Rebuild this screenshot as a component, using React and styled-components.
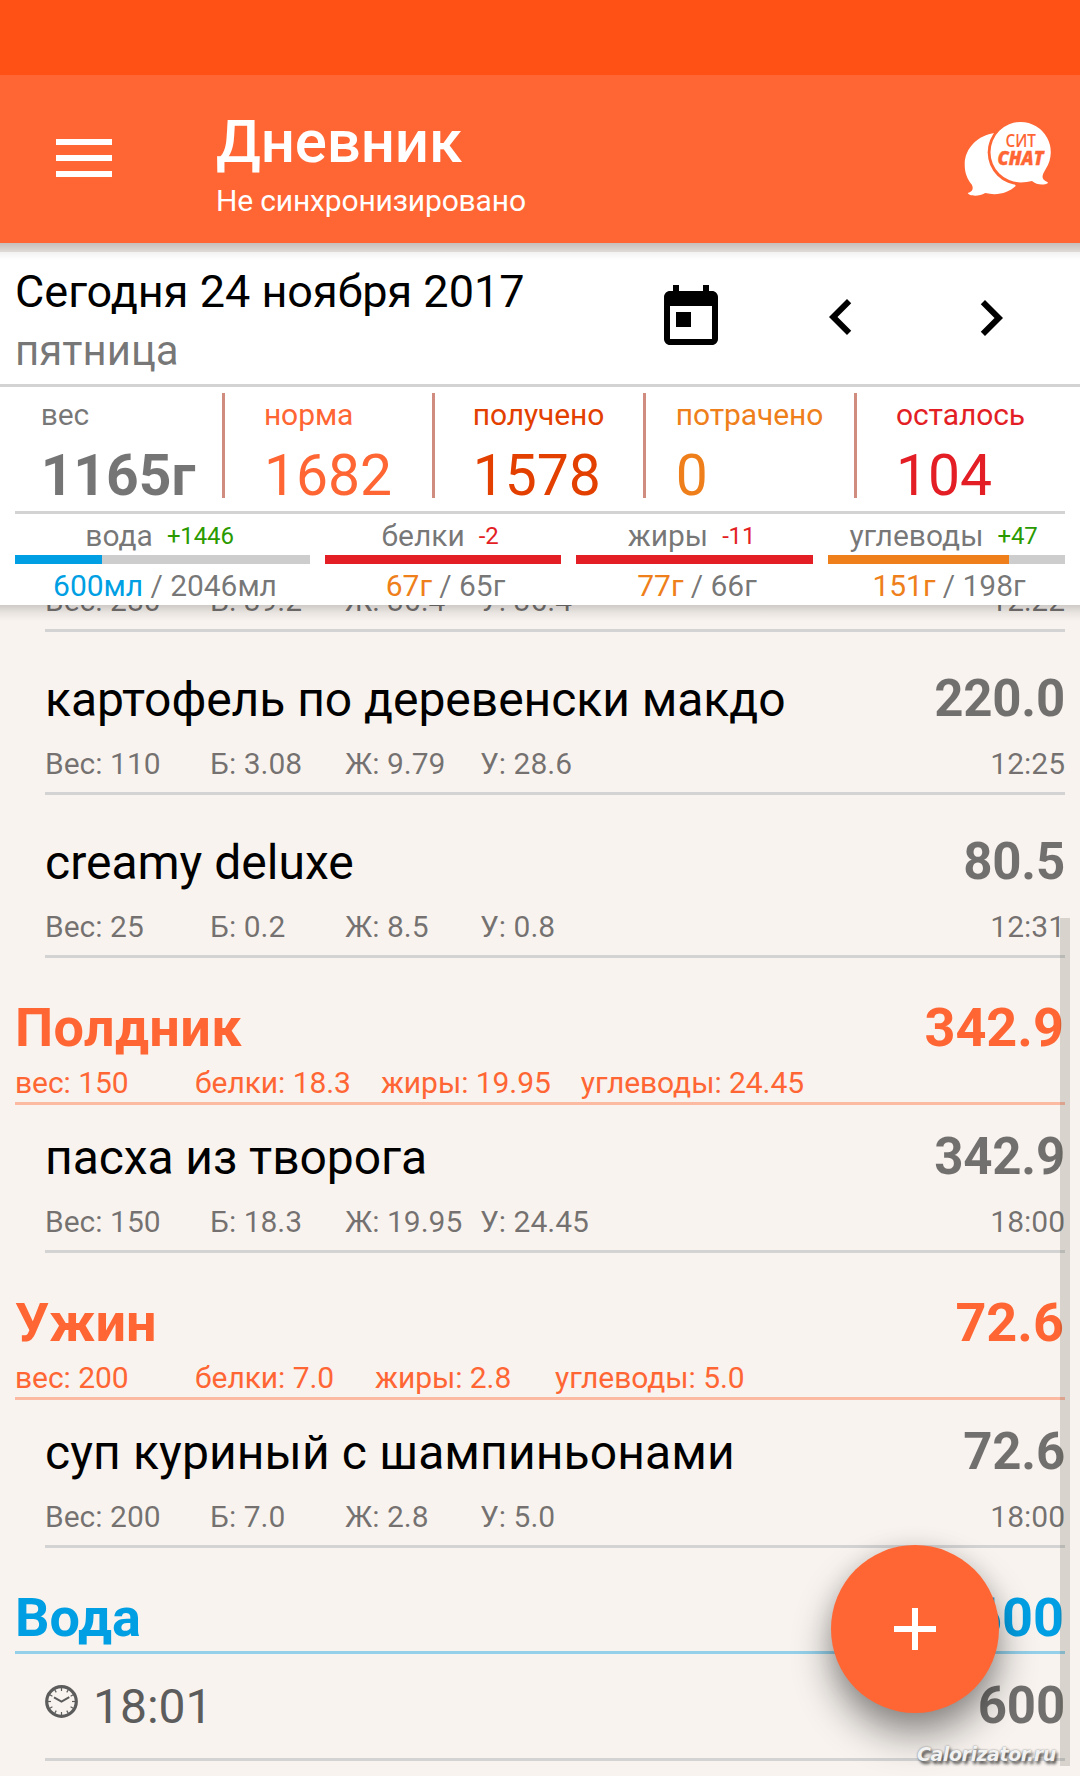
import React from "react";
import styled, { createGlobalStyle } from "styled-components";

const ORANGE = "#ff6634";
const BLUE = "#009fe3";
const RED = "#e31e25";
const AMBER = "#ee7f1a";
const GREEN = "#2a9a00";
const MUTED = "rgba(0, 0, 0, 0.54)";
const LINE = "#d3d3d3";

const GlobalStyle = createGlobalStyle`
  * { box-sizing: border-box; }
  body { margin: 0; font-family: Roboto, "Liberation Sans", sans-serif; color: #000; }
`;

const Screen = styled.main`
  position: relative;
  width: 1080px;
  height: 1776px;
  overflow: hidden;
  display: flex;
  flex-direction: column;
  background: #f8f3ef;
  white-space: nowrap;
`;

const StatusBar = styled.div`
  height: 75px;
  flex: none;
  background: #ff5015;
`;

const AppBar = styled.header`
  position: relative;
  z-index: 2;
  display: flex;
  align-items: flex-start;
  height: 168px;
  flex: none;
  padding-left: 56px;
  background: ${ORANGE};
  color: #fff;
  &::after {
    content: "";
    position: absolute;
    left: 0;
    right: 0;
    top: 168px;
    height: 18px;
    background: linear-gradient(#c6bfbd 0, #e0dbd6 9px, #f2f2f2 9px, #fff 17px);
  }
`;

const MenuButton = styled.div`
  display: flex;
  flex-direction: column;
  gap: 10px;
  width: 56px;
  margin-top: 64px;
`;

const MenuLine = styled.span`
  height: 6px;
  background: #fff;
`;

const Titles = styled.div`
  flex: 1;
  padding: 32px 0 0 104px;
`;

const Title = styled.h1`
  margin: 0;
  font-size: 60px;
  line-height: 70px;
  font-weight: 500;
  letter-spacing: -0.15px;
`;

const Subtitle = styled.div`
  margin-top: 6px;
  font-size: 30px;
  line-height: 36px;
  letter-spacing: -0.16px;
`;

const ChatLogo = styled.svg`
  width: 90px;
  height: 80px;
  margin: 45px 26px 0 0;
`;

const Panel = styled.section`
  position: relative;
  z-index: 1;
  height: 362px;
  flex: none;
  background: #fff;
  &::after {
    content: "";
    position: absolute;
    left: 0;
    right: 0;
    top: 362px;
    height: 16px;
    background: linear-gradient(rgba(0, 0, 0, 0.17), rgba(0, 0, 0, 0.06) 8px, rgba(0, 0, 0, 0));
  }
`;

const DateBar = styled.div`
  display: flex;
  height: 144px;
  padding: 22px 53px 0 15px;
  border-bottom: 3px solid ${LINE};
`;

const DateText = styled.div`
  width: 640px;
`;

const Today = styled.div`
  font-size: 45px;
  line-height: 54px;
`;

const Weekday = styled.div`
  margin-top: 7px;
  font-size: 42px;
  line-height: 50px;
  color: ${MUTED};
`;

const DateIcon = styled.svg`
  width: 72px;
  height: 72px;
  margin-top: ${(p) => p.$top}px;
  margin-right: ${(p) => p.$gap}px;
  flex: none;
`;

const Stats = styled.div`
  display: grid;
  grid-template-columns: 210px 210px 211px 211px 208px;
  grid-template-rows: 105px;
  height: 105px;
  margin: 6px 15px 13px;
`;

const StatCell = styled.div`
  display: flex;
  justify-content: center;
  padding: 4px 1px 0 0;
  color: ${(p) => p.$color};
  border-right: ${(p) => (p.$last ? "none" : "3px solid #d08c7e")};
`;

const StatLabel = styled.div`
  font-size: 30px;
  line-height: 36px;
  letter-spacing: -0.1px;
`;

const StatValue = styled.div`
  margin-top: 10px;
  font-size: 57px;
  line-height: 66px;
  font-weight: ${(p) => (p.$bold ? 700 : 400)};
`;

const Macros = styled.div`
  display: grid;
  grid-template-columns: 295px 236px 237px 237px;
  column-gap: 15px;
  margin: 0 15px;
  padding-top: 4px;
  border-top: 3px solid ${LINE};
  color: ${MUTED};
  font-size: 30px;
  line-height: 36px;
  text-align: center;
`;

const MacroHead = styled.div`
  display: flex;
  justify-content: center;
  align-items: center;
  gap: 14px;
  padding-right: 6px;
`;

const Delta = styled.span`
  font-size: 24px;
  letter-spacing: -0.15px;
  color: ${(p) => (p.$over ? RED : GREEN)};
`;

const Track = styled.div`
  height: 9px;
  margin: 1px 0 4px;
  background: #cdcdcd;
`;

const Fill = styled.div`
  height: 9px;
  background: ${(p) => p.$color};
`;

const Amounts = styled.div`
  padding-left: 5px;
  letter-spacing: -0.05px;
`;

const Amount = styled.span`
  color: ${(p) => p.$color};
`;

const List = styled.section`
  flex: 1;
  min-height: 0;
  overflow: hidden;
  padding: 0 15px;
`;

const Entry = styled.article`
  margin-left: 30px;
  padding: ${(p) => p.$top}px 0 10px;
  border-bottom: 3px solid ${LINE};
`;

const ClippedEntry = styled(Entry)`
  margin-top: -22px;
`;

const EntryHead = styled.div`
  display: flex;
  justify-content: space-between;
  height: 56px;
  margin-bottom: 18px;
  font-size: 48px;
  line-height: 56px;
`;

const EntryName = styled.span`
  letter-spacing: ${(p) => p.$spacing || 0}px;
`;

const Calories = styled.span`
  font-size: 51px;
  line-height: 54px;
  font-weight: 700;
  letter-spacing: -0.2px;
  color: ${MUTED};
`;

const EntryMeta = styled.div`
  display: grid;
  grid-template-columns: 165px 135px 135px 1fr auto;
  font-size: 30px;
  line-height: 36px;
  color: ${MUTED};
`;

const Meal = styled.header`
  padding: 38px 0 1px;
  color: ${(p) => p.$color};
  border-bottom: 3px solid ${(p) => p.$line};
`;

const MealHead = styled.div`
  display: flex;
  justify-content: space-between;
  padding-right: 1px;
  font-size: 54px;
  line-height: 64px;
  font-weight: 700;
`;

const MealName = styled.span`
  letter-spacing: ${(p) => p.$spacing || 0}px;
`;

const MealMeta = styled.div`
  display: flex;
  gap: 30px;
  margin-top: 5px;
  font-size: 30px;
  line-height: 36px;
  letter-spacing: -0.06px;
`;

const MealStat = styled.span`
  min-width: 150px;
`;

const WaterEntry = styled.article`
  display: flex;
  align-items: center;
  height: 107px;
  margin-left: 30px;
  padding-bottom: 1px;
  border-bottom: 3px solid ${LINE};
`;

const ClockIcon = styled.svg`
  width: 33px;
  height: 33px;
  margin: 0 15px 8px 0;
`;

const WaterTime = styled.span`
  flex: 1;
  padding-top: 2px;
  font-size: 48px;
  line-height: 56px;
  color: #5c5c5c;
`;

const ScrollThumb = styled.div`
  position: absolute;
  left: 1060px;
  top: 918px;
  width: 10px;
  height: 848px;
  background: rgba(60, 60, 40, 0.17);
`;

const Fab = styled.button`
  position: absolute;
  left: 831px;
  top: 1545px;
  width: 168px;
  height: 168px;
  padding: 0;
  display: grid;
  place-items: center;
  border: 0;
  border-radius: 50%;
  background: ${ORANGE};
  box-shadow: 0 22px 38px rgba(0, 0, 0, 0.42), 0 2px 22px rgba(0, 0, 0, 0.1);
`;

const Watermark = styled.div`
  position: absolute;
  left: 917px;
  top: 1742px;
  font: italic 700 19px/24px "DejaVu Sans", sans-serif;
  letter-spacing: -0.45px;
  color: #f2f2f2;
  text-shadow: 0 0 2px #777, 2px 3px 3px rgba(0, 0, 0, 0.65);
`;

const stats = [
  { label: "вес", value: "1165г", color: MUTED, bold: true },
  { label: "норма", value: "1682", color: ORANGE },
  { label: "получено", value: "1578", color: "#e34000" },
  { label: "потрачено", value: "0", color: AMBER },
  { label: "осталось", value: "104", color: RED },
];

const macros = [
  { label: "вода", delta: "+1446", now: "600мл", goal: "2046мл", fill: 29.5, bar: BLUE, color: BLUE },
  { label: "белки", delta: "-2", now: "67г", goal: "65г", fill: 100, bar: RED, color: AMBER },
  { label: "жиры", delta: "-11", now: "77г", goal: "66г", fill: 100, bar: RED, color: AMBER },
  { label: "углеводы", delta: "+47", now: "151г", goal: "198г", fill: 76.4, bar: AMBER, color: AMBER },
];

function Meta({ values, time }) {
  return (
    <EntryMeta>
      <span>Вес: {values[0]}</span>
      <span>Б: {values[1]}</span>
      <span>Ж: {values[2]}</span>
      <span>У: {values[3]}</span>
      <span>{time}</span>
    </EntryMeta>
  );
}

function Food({ name, calories, values, time, first, spacing }) {
  return (
    <Entry $top={first ? 25 : 40}>
      <EntryHead>
        <EntryName $spacing={spacing}>{name}</EntryName>
        <Calories>{calories}</Calories>
      </EntryHead>
      <Meta values={values} time={time} />
    </Entry>
  );
}

function MealHeader({ name, total, values, spacing, color = ORANGE, line = "#fdbaa3" }) {
  return (
    <Meal $color={color} $line={line}>
      <MealHead>
        <MealName $spacing={spacing}>{name}</MealName>
        <span>{total}</span>
      </MealHead>
      {values && (
        <MealMeta>
          <MealStat>вес: {values[0]}</MealStat>
          <MealStat>белки: {values[1]}</MealStat>
          <MealStat>жиры: {values[2]}</MealStat>
          <MealStat>углеводы: {values[3]}</MealStat>
        </MealMeta>
      )}
    </Meal>
  );
}

function Clock() {
  const ticks = Array.from({ length: 12 }, (_, i) => i * 30);
  return (
    <ClockIcon viewBox="0 0 33 33" fill="none" stroke="#5c5c5c">
      <circle cx="16.5" cy="16.5" r="14.8" strokeWidth="3.2" />
      {ticks.map((a) => (
        <path key={a} d="M16.5 3v3" strokeWidth="1.2" transform={`rotate(${a} 16.5 16.5)`} />
      ))}
      <path d="M9 12.3l7.5 4.2 7.8-4.4" strokeWidth="2" />
    </ClockIcon>
  );
}

export default function App() {
  return (
    <Screen>
      <GlobalStyle />
      <StatusBar />
      <AppBar>
        <MenuButton>
          <MenuLine />
          <MenuLine />
          <MenuLine />
        </MenuButton>
        <Titles>
          <Title>Дневник</Title>
          <Subtitle>Не синхронизировано</Subtitle>
        </Titles>
        <ChatLogo viewBox="0 0 90 80">
          <path
            fill="#fff"
            d="M31 13C14 15 1 28 .7 44c-.1 9 2.6 15 7 20.5 2.3 4 .5 7.5-4 8.5 1 3 11 4 17.5 0 12 3 23 0 30.5-7L31 13z"
          />
          <circle cx="56.7" cy="32.3" r="33" fill={ORANGE} />
          <path
            fill="#fff"
            d="M56.7 2a30.2 30.2 0 1 0 0 60.4c4 0 8-.8 11.3-1.4 4.5 4 12 4.5 16 2 .5-1-5-2-5.5-6 0-3 1.5-5 3.5-8.5A30.2 30.2 0 0 0 56.7 2z"
          />
          <text x="41.5" y="27.3" fontFamily="Open Sans" fontSize="18.5" fontWeight="600" fill={ORANGE} textLength="30.5" lengthAdjust="spacingAndGlyphs">СИТ</text>
          <text x="33.5" y="44.5" fontFamily="Open Sans" fontSize="19.5" fontWeight="800" fontStyle="italic" fill={ORANGE} stroke={ORANGE} strokeWidth="0.4" textLength="46" lengthAdjust="spacingAndGlyphs">CHAT</text>
        </ChatLogo>
      </AppBar>

      <Panel>
        <DateBar>
          <DateText>
            <Today>Сегодня 24 ноября 2017</Today>
            <Weekday>пятница</Weekday>
          </DateText>
          <DateIcon viewBox="0 0 24 24" $top={17} $gap={78}>
            <path d="M19 3h-1V1h-2v2H8V1H6v2H5c-1.11 0-1.99.9-1.99 2L3 19c0 1.1.89 2 2 2h14c1.1 0 2-.9 2-2V5c0-1.1-.9-2-2-2zm0 16H5V8h14v11zM7 10h5v5H7z" />
          </DateIcon>
          <DateIcon viewBox="0 0 24 24" $top={16} $gap={78}>
            <path d="M15.41 7.41L14 6l-6 6 6 6 1.41-1.41L10.83 12z" />
          </DateIcon>
          <DateIcon viewBox="0 0 24 24" $top={16.5} $gap={0}>
            <path d="M10 6L8.59 7.41 13.17 12l-4.58 4.59L10 18l6-6z" />
          </DateIcon>
        </DateBar>
        <Stats>
          {stats.map((s, i) => (
            <StatCell key={s.label} $color={s.color} $last={i === stats.length - 1}>
              <div>
                <StatLabel>{s.label}</StatLabel>
                <StatValue $bold={s.bold}>{s.value}</StatValue>
              </div>
            </StatCell>
          ))}
        </Stats>
        <Macros>
          {macros.map((m) => (
            <div key={m.label}>
              <MacroHead>
                <span>{m.label}</span>
                <Delta $over={m.delta[0] === "-"}>{m.delta}</Delta>
              </MacroHead>
              <Track>
                <Fill $color={m.bar} style={{ width: `${m.fill}%` }} />
              </Track>
              <Amounts>
                <Amount $color={m.color}>{m.now}</Amount> / {m.goal}
              </Amounts>
            </div>
          ))}
        </Macros>
      </Panel>

      <List>
        <ClippedEntry $top={0}>
          <Meta values={["280", "39.2", "36.4", "36.4"]} time="12:22" />
        </ClippedEntry>
        <Food name="картофель по деревенски макдо" calories="220.0" values={["110", "3.08", "9.79", "28.6"]} time="12:25" spacing={-0.04} />
        <Food name="creamy deluxe" calories="80.5" values={["25", "0.2", "8.5", "0.8"]} time="12:31" />
        <MealHeader name="Полдник" total="342.9" values={["150", "18.3", "19.95", "24.45"]} spacing={0.4} />
        <Food first name="пасха из творога" calories="342.9" values={["150", "18.3", "19.95", "24.45"]} time="18:00" spacing={-0.07} />
        <MealHeader name="Ужин" total="72.6" values={["200", "7.0", "2.8", "5.0"]} />
        <Food first name="суп куриный с шампиньонами" calories="72.6" values={["200", "7.0", "2.8", "5.0"]} time="18:00" spacing={0.13} />
        <MealHeader name="Вода" total="600" color={BLUE} line="#94d0ea" />
        <WaterEntry>
          <Clock />
          <WaterTime>18:01</WaterTime>
          <Calories>600</Calories>
        </WaterEntry>
      </List>

      <ScrollThumb />
      <Fab aria-label="+">
        <svg width="42" height="42" viewBox="0 0 42 42">
          <path d="M18 0h6v18h18v6H24v18h-6V24H0v-6h18z" fill="#fff" />
        </svg>
      </Fab>
      <Watermark>Calorizator.ru</Watermark>
    </Screen>
  );
}
